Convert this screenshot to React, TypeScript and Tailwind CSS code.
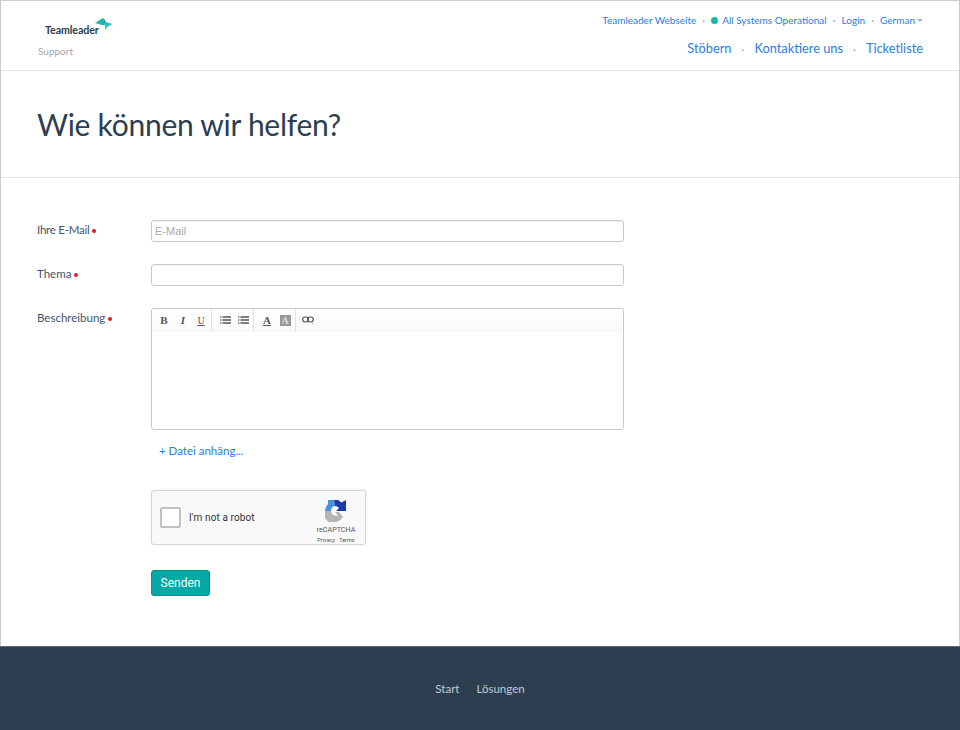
import React from "react";

const Dot = () => <span className="text-[#99a0a8] text-[11px] leading-none">·</span>;
const Req = () => <span className="ml-[3px] inline-block w-[4px] h-[4px] rounded-full bg-[#e8131b] align-middle mb-[1px]" />;

function Logo() {
  return (
    <div className="flex items-start h-[20px] pl-[7px]">
      <span className="text-[10.7px] font-bold text-[#2c3e50] leading-none mt-[6px] tracking-[-0.1px]">Teamleader</span>
      <svg width="18" height="13" viewBox="0 0 18 13" className="-ml-[4px] -mt-[1px] relative">
        <path d="M0 5 L8 0 L9.5 7 L7 7 Z" fill="#1fb5ad" />
        <path d="M8 0 L10 2 L11 6 L9.5 7 Z" fill="#0c8f8d" />
        <path d="M9.5 5 L11 4 L17.5 6 L12 9 L10.5 12.5 Z" fill="#2bc4bb" />
      </svg>
    </div>
  );
}

function Toolbar() {
  const b = "w-[18px] h-[18px] flex items-center justify-center text-[#555]";
  return (
    <div className="h-[23px] flex items-center pl-[3px] bg-gradient-to-b from-white to-[#f9f9f9] border-b border-[#f5f5f5]">
      <span className={`${b} font-['Liberation_Serif',serif] font-bold text-[11px]`}>B</span>
      <span className={`${b} ml-[1px] font-['Liberation_Serif',serif] font-bold italic text-[11px]`}>I</span>
      <span className={`${b} font-['Liberation_Serif',serif] underline text-[10px]`}>U</span>
      <span className="w-px h-[23px] bg-[#e2e2e2] ml-[1px] mr-[4px]" />
      {[0, 1].map((i) => (
        <span key={i} className={b}>
          <svg width="11" height="8" viewBox="0 0 11 8">
            <path d="M0 1h1.5M0 4h1.5M0 7h1.5" stroke="#777" strokeWidth="1.3" />
            <path d="M2.5 1h8.5M2.5 4h8.5M2.5 7h8.5" stroke="#555" strokeWidth="1.5" />
          </svg>
        </span>
      ))}
      <span className="w-px h-[23px] bg-[#e2e2e2] ml-[1px] mr-[4px]" />
      <span className={`${b} font-['Liberation_Serif',serif] underline font-bold text-[11px]`}>A</span>
      <span className={b}>
        <span className="w-[11px] h-[11px] bg-[#999] text-[#ddd] font-['Liberation_Serif',serif] font-bold text-[10px] leading-[11px] text-center">A</span>
      </span>
      <span className="w-px h-[23px] bg-[#e2e2e2] ml-[1px] mr-[3px]" />
      <span className={b}>
        <svg width="12" height="8" viewBox="0 0 12 8">
          <rect x="0.7" y="1" width="5.6" height="5" rx="2.4" fill="none" stroke="#555" strokeWidth="1.2" />
          <rect x="5.7" y="1" width="5.6" height="5" rx="2.4" fill="none" stroke="#555" strokeWidth="1.2" />
          <rect x="10" y="7" width="1" height="1" fill="#999" />
        </svg>
      </span>
    </div>
  );
}

function Recaptcha() {
  return (
    <div className="w-[215px] h-[55px] border border-[#d6d6d6] rounded-[3px] bg-[#f9f9f9] shadow-[0_0_3px_rgba(0,0,0,0.08)] flex items-start pl-[8px] pr-[9px]">
      <span className="mt-[16px] w-[21px] h-[21px] bg-white border-2 border-[#c1c1c1] rounded-[2px]" />
      <span className="mt-[20px] ml-[8px] text-[10px] leading-[13px] text-[#333] font-['Roboto',sans-serif] tracking-[0.1px]">I'm not a robot</span>
      <div className="ml-auto flex flex-col items-center w-[40px] font-['Roboto',sans-serif] pt-[9px]">
        <svg width="22" height="22" viewBox="0 0 22 22">
          <path d="M3 0 L9 0 L10 6 A5 5 0 0 0 6 11 L0 11 A11 11 0 0 1 3 4 Z" fill="#4a90e2" />
          <path d="M9 0 H13 L16.5 2.5 L21 0 V11 H11 L14 8 A5 5 0 0 0 10 6 Z" fill="#1c3aa9" />
          <path d="M0 11 H6 A5 5 0 0 0 13 15.5 L10 12 H14 L18 17 A11 11 0 0 1 11 22 H3 L0 18 Z" fill="#b5b5b5" />
        </svg>
        <span className="text-[7.2px] leading-[9px] text-[#555] mt-[3px] whitespace-nowrap">reCAPTCHA</span>
        <span className="text-[5.5px] leading-[8px] text-[#555] mt-[2px] whitespace-nowrap">Privacy · Terms</span>
      </div>
    </div>
  );
}

export default function App() {
  return (
    <div className="w-[960px] h-[730px] flex flex-col bg-white font-['Lato',sans-serif] text-[#44546a] overflow-hidden">
      <div className="h-[646px] shrink-0 border-x border-t border-[#c8ccd0] flex flex-col">
        <header className="h-[70px] shrink-0 border-b border-[#e8e9eb] flex justify-between pl-[37px] pr-[36px]">
          <div className="pt-[18px]">
            <Logo />
            <div className="text-[10px] text-[#a3a8ae] mt-[5px] leading-[14px]">Support</div>
          </div>
          <div className="flex flex-col items-end text-[#2a7de1]">
            <div className="flex items-center gap-[6px] text-[10px] h-[14px] mt-[12px]">
              <span>Teamleader Webseite</span>
              <Dot />
              <span className="w-[7px] h-[7px] rounded-full bg-[#12b8a6] mr-[-2px]" />
              <span>All Systems Operational</span>
              <Dot />
              <span>Login</span>
              <Dot />
              <span className="flex items-center gap-[2px]">
                German
                <span className="w-0 h-0 border-x-[3px] border-x-transparent border-t-[3px] border-t-[#aab0b6]" />
              </span>
            </div>
            <div className="flex items-center gap-[10px] text-[12.8px] mt-[12px] h-[20px]">
              <span>Stöbern</span>
              <Dot />
              <span>Kontaktiere uns</span>
              <Dot />
              <span>Ticketliste</span>
            </div>
          </div>
        </header>

        <section className="h-[107px] shrink-0 border-b border-[#e8e9eb] pl-[36px] flex items-center">
          <h1 className="text-[30px] leading-none text-[#2c3e50] font-normal tracking-[-0.27px] -mt-[1px]">Wie können wir helfen?</h1>
        </section>

        <form className="pl-[36px] pt-[42px] flex flex-col">
          <div className="flex h-[22px]">
            <label className="w-[114px] text-[11.5px] leading-[20px] tracking-[-0.25px]">Ihre E-Mail<Req /></label>
            <div className="w-[473px] h-[22px] border border-[#c9c9c9] rounded-[3px] pl-[3px] text-[11px] leading-[20px] text-[#a9a9a9] font-['Liberation_Sans',sans-serif] shadow-[inset_0_1px_1px_rgba(0,0,0,0.06)]">E-Mail</div>
          </div>
          <div className="flex h-[22px] mt-[22px]">
            <label className="w-[114px] text-[11.5px] leading-[20px]">Thema<Req /></label>
            <div className="w-[473px] h-[22px] border border-[#c9c9c9] rounded-[3px] shadow-[inset_0_1px_1px_rgba(0,0,0,0.06)]" />
          </div>
          <div className="flex mt-[22px]">
            <label className="w-[114px] text-[11.5px] leading-[20px]">Beschreibung<Req /></label>
            <div className="w-[473px] h-[122px] border border-[#c9c9c9] rounded-[3px] overflow-hidden">
              <Toolbar />
            </div>
          </div>
          <div className="pl-[122px] mt-[14px] text-[11.5px] leading-[14px] text-[#2a7de1]">+ Datei anhäng...</div>
          <div className="pl-[114px] mt-[32px]"><Recaptcha /></div>
          <div className="pl-[114px] mt-[24px]">
            <button type="button" className="w-[59px] h-[26px] bg-[#04a9a5] border border-[#068f8c] rounded-[3px] text-white text-[12px] leading-none font-['Roboto',sans-serif]">Senden</button>
          </div>
        </form>
      </div>
      <footer className="h-[84px] shrink-0 bg-[#2c3e50] border-t border-[#5d6b7a] pt-px flex justify-center items-center gap-[17px] text-[11.5px] text-[#c3cad1]">
        <span>Start</span>
        <span>Lösungen</span>
      </footer>
    </div>
  );
}
